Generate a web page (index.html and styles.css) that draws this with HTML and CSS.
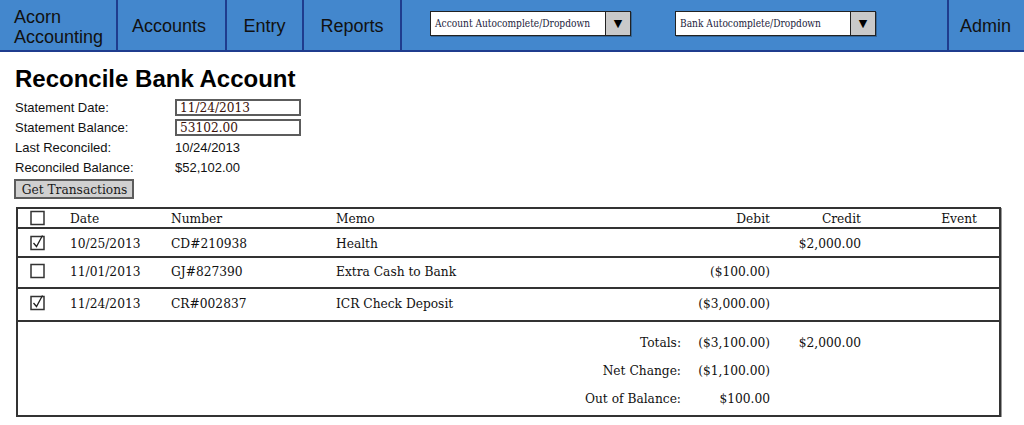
FILE: index.html
```html
<!DOCTYPE html>
<html lang="en">
<head>
<meta charset="utf-8">
<title>Reconcile Bank Account</title>
<link rel="stylesheet" href="styles.css">
</head>
<body>
<nav class="topbar">
  <div class="nav-item brand">Acorn<br>Accounting</div>
  <div class="nav-item nav-accounts">Accounts</div>
  <div class="nav-item nav-entry">Entry</div>
  <div class="nav-item nav-reports">Reports</div>
  <div class="nav-tools">
    <div class="combo"><span class="combo-text">Account Autocomplete/Dropdown</span><span class="combo-btn">▼</span></div>
    <div class="combo"><span class="combo-text">Bank Autocomplete/Dropdown</span><span class="combo-btn">▼</span></div>
  </div>
  <div class="nav-item nav-admin">Admin</div>
</nav>

<main class="page">
  <h1 class="title">Reconcile Bank Account</h1>
  <div class="fields">
    <div class="field-label">Statement Date:</div>
    <div class="field-value"><div class="field-input">11/24/2013</div></div>
    <div class="field-label">Statement Balance:</div>
    <div class="field-value"><div class="field-input">53102.00</div></div>
    <div class="field-label">Last Reconciled:</div>
    <div class="field-value">10/24/2013</div>
    <div class="field-label">Reconciled Balance:</div>
    <div class="field-value">$52,102.00</div>
  </div>
  <button class="get-btn" type="button">Get Transactions</button>

  <section class="txn">
    <div class="row head">
      <div class="cell cb"><svg class="check" width="16" height="16" viewBox="0 0 16 16"><rect x="1" y="1.5" width="13" height="13" fill="#fff" stroke="#333" stroke-width="1.5"/></svg></div>
      <div class="cell">Date</div>
      <div class="cell">Number</div>
      <div class="cell">Memo</div>
      <div class="cell num">Debit</div>
      <div class="cell num">Credit</div>
      <div class="cell num">Event</div>
      <div class="cell"></div>
    </div>
    <div class="row r1">
      <div class="cell cb"><svg class="check" width="16" height="16" viewBox="0 0 16 16"><rect x="1" y="1.5" width="13" height="13" fill="#fff" stroke="#333" stroke-width="1.5"/><polyline points="3.5,8 6.5,11.5 12.5,0.5" fill="none" stroke="#222" stroke-width="1.3"/></svg></div>
      <div class="cell">10/25/2013</div>
      <div class="cell">CD#210938</div>
      <div class="cell">Health</div>
      <div class="cell num"></div>
      <div class="cell num">$2,000.00</div>
      <div class="cell num"></div>
      <div class="cell"></div>
    </div>
    <div class="row r2">
      <div class="cell cb"><svg class="check" width="16" height="16" viewBox="0 0 16 16"><rect x="1" y="1.5" width="13" height="13" fill="#fff" stroke="#333" stroke-width="1.5"/></svg></div>
      <div class="cell">11/01/2013</div>
      <div class="cell">GJ#827390</div>
      <div class="cell">Extra Cash to Bank</div>
      <div class="cell num">($100.00)</div>
      <div class="cell num"></div>
      <div class="cell num"></div>
      <div class="cell"></div>
    </div>
    <div class="row r3">
      <div class="cell cb"><svg class="check" width="16" height="16" viewBox="0 0 16 16"><rect x="1" y="1.5" width="13" height="13" fill="#fff" stroke="#333" stroke-width="1.5"/><polyline points="3.5,8 6.5,11.5 12.5,0.5" fill="none" stroke="#222" stroke-width="1.3"/></svg></div>
      <div class="cell">11/24/2013</div>
      <div class="cell">CR#002837</div>
      <div class="cell">ICR Check Deposit</div>
      <div class="cell num">($3,000.00)</div>
      <div class="cell num"></div>
      <div class="cell num"></div>
      <div class="cell"></div>
    </div>
    <div class="totals">
      <div class="tot-label">Totals:</div><div class="num">($3,100.00)</div><div class="num">$2,000.00</div><div></div>
      <div class="tot-label">Net Change:</div><div class="num">($1,100.00)</div><div class="num"></div><div></div>
      <div class="tot-label">Out of Balance:</div><div class="num">$100.00</div><div class="num"></div><div></div>
    </div>
  </section>
</main>
</body>
</html>
```

FILE: styles.css
```css
html, body {
  margin: 0;
  padding: 0;
  background: #fff;
}

body {
  font-family: "Liberation Sans", Arial, sans-serif;
  color: #111;
}

/* ---------- top bar ---------- */
.topbar {
  display: flex;
  height: 52px;
  box-sizing: border-box;
  background: #4387cd;
  border-bottom: 2px solid #1f3c8e;
  font-size: 18px;
  color: #111;
}

.nav-item {
  display: flex;
  align-items: center;
  justify-content: center;
  box-sizing: border-box;
  padding-top: 2px;
  border-right: 2px solid #1f3c8e;
}

.brand {
  width: 118px;
  justify-content: flex-start;
  padding-left: 14px;
  padding-top: 3px;
  line-height: 20px;
}

.nav-accounts { width: 109px; padding-right: 5px; }
.nav-entry { width: 77px; }
.nav-reports { width: 98px; }

.nav-admin {
  width: 77px;
  padding-right: 2px;
  border-right: none;
  border-left: 2px solid #1f3c8e;
}

.nav-tools {
  flex: 1;
  display: flex;
  align-items: flex-start;
  gap: 44px;
  padding: 11px 0 0 28px;
}

.combo {
  display: flex;
  width: 201px;
  height: 25px;
  box-sizing: border-box;
  border: 1px solid #222;
  background: #fff;
  box-shadow: 1px 1px 0 rgba(0, 0, 0, 0.25);
}

.combo-text {
  flex: 1;
  display: flex;
  align-items: center;
  padding-left: 4px;
  font-family: "DejaVu Serif", serif;
  font-stretch: condensed;
  font-size: 10.1px;
  color: #1c1c3c;
}

.combo-btn {
  width: 24px;
  display: flex;
  align-items: center;
  justify-content: center;
  border-left: 1px solid #222;
  background: #c9c9c9;
  font-family: "DejaVu Sans", sans-serif;
  font-size: 11px;
  color: #000;
}

/* ---------- page ---------- */
.page {
  padding: 0 0 0 15px;
}

.title {
  margin: 13px 0 5px;
  font-size: 24px;
  line-height: 28px;
  font-weight: bold;
  color: #000;
}

.fields {
  display: grid;
  grid-template-columns: 160px auto;
  grid-auto-rows: 20px;
  font-size: 13px;
  line-height: 20px;
  color: #111;
}

.field-input {
  width: 126px;
  height: 17px;
  box-sizing: border-box;
  margin-top: 1px;
  border: 2px solid #5c5c5c;
  padding-left: 3px;
  font-family: "DejaVu Serif", serif;
  font-stretch: condensed;
  font-size: 13.5px;
  line-height: 12px;
  color: #3b120a;
}

.get-btn {
  display: block;
  margin: 1px 0 0 -1px;
  width: 120px;
  height: 20px;
  padding: 0 0 0 1px;
  box-sizing: border-box;
  border: 2px solid #5c5c5c;
  background: #d0d0d0;
  font-family: "DejaVu Serif", serif;
  font-stretch: condensed;
  font-size: 13.6px;
  line-height: 16px;
  color: #1a1a1a;
}

/* ---------- transactions ---------- */
.txn {
  margin: 8px 0 0 1px;
  width: 985px;
  box-sizing: border-box;
  border: 2px solid #333;
  box-shadow: 1px 1px 0 #999;
  font-family: "DejaVu Serif", serif;
  font-stretch: condensed;
  font-size: 13.6px;
  color: #111;
}

.row {
  display: grid;
  grid-template-columns: 52px 101px 165px 354px 80px 91px 116px 1fr;
  align-items: center;
  box-sizing: border-box;
  border-bottom: 2px solid #333;
}

.row.head { height: 20px; }
.row.r1 { height: 29px; }
.row.r2 { height: 31px; padding-bottom: 3px; }
.row.r3 { height: 33px; padding-bottom: 3px; }

.cell {
  white-space: nowrap;
}

.cb {
  display: flex;
  align-items: center;
  padding-left: 12px;
}

.check {
  display: block;
}

.num {
  text-align: right;
}

.totals {
  display: grid;
  grid-template-columns: 672px 80px 91px 1fr;
  grid-auto-rows: 28px;
  align-items: center;
  padding: 6px 0 3px;
}

.tot-label {
  text-align: right;
  padding-right: 9px;
}
```
